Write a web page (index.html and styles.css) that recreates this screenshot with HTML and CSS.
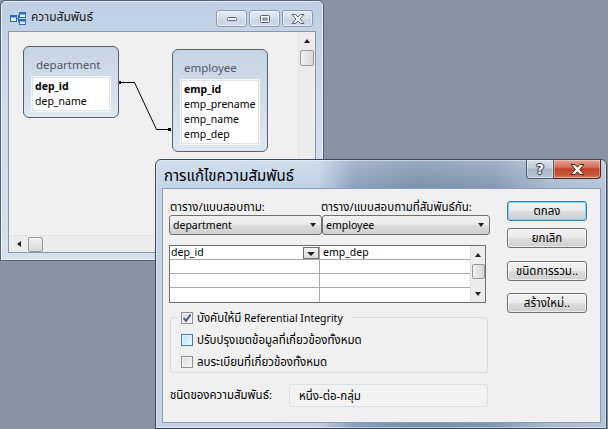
FILE: index.html
```html
<!DOCTYPE html>
<html>
<head>
<meta charset="utf-8">
<link rel="stylesheet" href="styles.css">
</head>
<body>
<div class="desktop">
  <div class="win">
    <div class="win-title">
      <svg class="win-icon" width="16" height="13" viewBox="0 0 16 13">
        <rect x="0.5" y="3.5" width="6" height="6" fill="#e8f2fc" stroke="#2d6cb5"/>
        <rect x="1" y="4" width="5" height="1.5" fill="#2d6cb5"/>
        <rect x="9.5" y="0.5" width="6" height="5" fill="#e8f2fc" stroke="#2d6cb5"/>
        <rect x="10" y="1" width="5" height="1.5" fill="#2d6cb5"/>
        <rect x="9.5" y="7.5" width="6" height="5" fill="#e8f2fc" stroke="#2d6cb5"/>
        <rect x="10" y="8" width="5" height="1.5" fill="#2d6cb5"/>
        <path d="M7 6.5 H8.5 V3 H9.5 M8.5 6.5 V10 H9.5" fill="none" stroke="#2d6cb5"/>
      </svg>
      <span class="win-caption">ความสัมพันธ์</span>
      <div class="cap-btns">
        <div class="cbtn"><svg width="12" height="6" viewBox="0 0 12 6"><rect x="1.5" y="1.5" width="9" height="3" rx="1" fill="#fff" stroke="#55647a"/></svg></div>
        <div class="cbtn"><svg width="12" height="10" viewBox="0 0 12 10"><rect x="1.5" y="1.5" width="9" height="7" rx="1" fill="#fff" stroke="#55647a"/><rect x="4" y="4" width="4" height="2" fill="#dfe7f1" stroke="#55647a"/></svg></div>
        <div class="cbtn"><svg width="14" height="10" viewBox="0 0 14 10"><polygon points="1,0.5 4.5,0.5 7,3 9.5,0.5 13,0.5 9,5 13,9.5 9.5,9.5 7,7 4.5,9.5 1,9.5 5,5" fill="#fff" stroke="#55647a" stroke-linejoin="round"/></svg></div>
      </div>
    </div>
    <div class="win-client">
      <div class="canvas-row">
        <div class="canvas">
          <svg class="rel-line" width="288" height="203" viewBox="0 0 288 203">
            <path d="M110.5 50.5 H125.5 L147.5 97.5 H161.5" fill="none" stroke="#000" stroke-width="1"/>
            <rect x="109" y="49" width="3" height="3" fill="#000"/>
            <rect x="159" y="96" width="3" height="3" fill="#000"/>
          </svg>
          <div class="tcard t-dep">
            <div class="tcard-title">department</div>
            <div class="tfields">
              <div class="tf key">dep_id</div>
              <div class="tf">dep_name</div>
            </div>
          </div>
          <div class="tcard t-emp">
            <div class="tcard-title">employee</div>
            <div class="tfields">
              <div class="tf key">emp_id</div>
              <div class="tf">emp_prename</div>
              <div class="tf">emp_name</div>
              <div class="tf">emp_dep</div>
            </div>
          </div>
        </div>
        <div class="vscroll">
          <div class="sarrow"><span class="tri-up"></span></div>
          <div class="vthumb"></div>
        </div>
      </div>
      <div class="hscroll">
        <div class="harrow"><span class="tri-left"></span></div>
        <div class="hthumb"></div>
      </div>
    </div>
  </div>

  <div class="dlg">
    <div class="dlg-title">
      <span class="dlg-caption">การแก้ไขความสัมพันธ์</span>
      <div class="dlg-btns">
        <div class="dbtn-help">?</div>
        <div class="dbtn-close"><svg width="15" height="11" viewBox="0 0 15 11"><polygon points="1,0.5 5,0.5 7.5,3.2 10,0.5 14,0.5 9.7,5.5 14,10.5 10,10.5 7.5,7.8 5,10.5 1,10.5 5.3,5.5" fill="#fff" stroke="#4a2018" stroke-linejoin="round"/></svg></div>
      </div>
    </div>
    <div class="dlg-client">
      <div class="dlg-main">
        <div class="lbl-row">
          <span class="th">ตาราง/แบบสอบถาม:</span>
          <span class="th">ตาราง/แบบสอบถามที่สัมพันธ์กัน:</span>
        </div>
        <div class="combo-row">
          <div class="combo"><span>department</span><span class="tri-down"></span></div>
          <div class="combo"><span>employee</span><span class="tri-down"></span></div>
        </div>
        <div class="fgrid">
          <div class="fcells">
            <div class="fc c1"><span>dep_id</span><span class="mini-dd"><span class="tri-down small"></span></span></div>
            <div class="fc">emp_dep</div>
            <div class="fc c1"></div><div class="fc"></div>
            <div class="fc c1"></div><div class="fc"></div>
            <div class="fc c1 last"></div><div class="fc last"></div>
          </div>
          <div class="gscroll">
            <div class="garrow"><span class="tri-up"></span></div>
            <div class="gthumb"></div>
            <div class="garrow bottom"><span class="tri-down"></span></div>
          </div>
        </div>
        <div class="group">
          <div class="chk-row legend">
            <span class="chk checked"><svg width="10" height="10" viewBox="0 0 10 10"><path d="M1.5 5 L4 7.8 L8.6 1.5" fill="none" stroke="#4c5f92" stroke-width="2"/></svg></span>
            <span><span class="th">บังคับให้มี</span> Referential Integrity</span>
          </div>
          <div class="chk-row">
            <span class="chk hot"></span>
            <span class="th">ปรับปรุงเขตข้อมูลที่เกี่ยวข้องทั้งหมด</span>
          </div>
          <div class="chk-row">
            <span class="chk"></span>
            <span class="th">ลบระเบียนที่เกี่ยวข้องทั้งหมด</span>
          </div>
        </div>
        <div class="type-row">
          <span class="th">ชนิดของความสัมพันธ์:</span>
          <div class="type-box"><span class="th">หนึ่ง-ต่อ-กลุ่ม</span></div>
        </div>
      </div>
      <div class="dlg-side">
        <div class="btn default"><span class="th">ตกลง</span></div>
        <div class="btn b-cancel"><span class="th">ยกเลิก</span></div>
        <div class="btn b-join"><span class="th">ชนิดการรวม..</span></div>
        <div class="btn b-new"><span class="th">สร้างใหม่..</span></div>
      </div>
    </div>
  </div>
</div>
</body>
</html>
```
FILE: styles.css
```css
* { box-sizing: border-box; }
body {
  margin: 0;
  width: 608px;
  height: 429px;
  overflow: hidden;
  background: #8a92a6;
  font-family: "Noto Sans", Tahoma, "Noto Sans Thai", Loma, Garuda, sans-serif;
  font-size: 10.5px;
  color: #000;
}
.th { font-size: 11.5px; }
.desktop { position: relative; width: 608px; height: 429px; }

/* ---------- relationship window ---------- */
.win {
  position: absolute;
  left: 0;
  top: 0;
  width: 324px;
  height: 261px;
  border: 1px solid #566276;
  border-radius: 6px 6px 0 0;
  background: linear-gradient(#bfd0e4, #cfdcea 40%, #d6e1ed);
  box-shadow: inset 0 0 0 1px rgba(255,255,255,0.55);
  padding: 0 7px 7px;
  display: flex;
  flex-direction: column;
}
.win-title { height: 30px; display: flex; align-items: flex-start; }
.win-icon { margin: 11px 0 0 2px; flex: none; }
.win-caption { margin: 8px 0 0 5px; line-height: 16px; font-size: 12px; color: #1a1a1a; }
.cap-btns { margin: 9px 3px 0 auto; display: flex; gap: 2px; }
.cbtn {
  width: 31px;
  height: 17px;
  border: 1px solid #8a9bb2;
  border-radius: 3px;
  background: linear-gradient(#e4ecf5, #d3deeb 50%, #c6d4e5 51%, #cfdbe9);
  box-shadow: inset 0 0 0 1px rgba(255,255,255,0.5);
  display: flex;
  align-items: center;
  justify-content: center;
}
.win-client {
  flex: 1;
  border: 1px solid #8597b0;
  background: #f0f0f0;
  display: flex;
  flex-direction: column;
}
.canvas-row { flex: 1; display: flex; }
.canvas { flex: 1; position: relative; }
.rel-line { position: absolute; left: 0; top: 0; }

.tcard {
  position: absolute;
  width: 96px;
  border: 1px solid #58606b;
  border-radius: 6px;
  background: linear-gradient(#c7d4e3, #d4dfeb 60%, #dfe8f2);
  padding: 0 8px 8px 8px;
}
.t-dep { left: 14px; top: 14px; height: 72px; }
.t-emp { left: 163px; top: 17px; height: 103px; }
.tcard-title {
  height: 30px;
  padding: 10px 0 0 4px;
  line-height: 16px;
  font-size: 11.5px;
  color: #4e5868;
}
.t-emp .tcard-title { padding-left: 3px; }
.tfields {
  background: #fff;
  border: 1px solid #dfe4ea;
  box-shadow: 0 0 0 1px #f4f7fa;
  padding: 1px 2px 1px 2px;
}
.tf { line-height: 15px; height: 15px; font-size: 10.5px; white-space: nowrap; }
.tf.key { font-weight: bold; }

.vscroll {
  width: 17px;
  background: #ececec;
  border-left: 1px solid #e2e2e2;
  display: flex;
  flex-direction: column;
  align-items: center;
}
.sarrow { height: 17px; width: 100%; display: flex; align-items: center; justify-content: center; }
.vthumb {
  margin-top: 1px;
  width: 14px;
  height: 16px;
  border: 1px solid #989898;
  border-radius: 2px;
  background: linear-gradient(to right, #f4f4f4, #e4e4e4 50%, #d8d8d8);
}
.hscroll {
  height: 17px;
  background: #ececec;
  border-top: 1px solid #e2e2e2;
  display: flex;
  align-items: center;
}
.harrow { width: 17px; height: 100%; display: flex; align-items: center; justify-content: center; margin-left: 1px; }
.hthumb {
  margin-left: 1px;
  width: 15px;
  height: 15px;
  border: 1px solid #989898;
  border-radius: 2px;
  background: linear-gradient(#f4f4f4, #e4e4e4 50%, #d8d8d8);
}
.tri-up { width: 0; height: 0; border-left: 3.5px solid transparent; border-right: 3.5px solid transparent; border-bottom: 4px solid #222; }
.tri-down { width: 0; height: 0; border-left: 3.5px solid transparent; border-right: 3.5px solid transparent; border-top: 4px solid #222; }
.tri-left { width: 0; height: 0; border-top: 3.5px solid transparent; border-bottom: 3.5px solid transparent; border-right: 4px solid #222; }

/* ---------- dialog ---------- */
.dlg {
  position: absolute;
  left: 155px;
  top: 159px;
  width: 452px;
  height: 270px;
  border: 1px solid #3b475a;
  border-radius: 6px 6px 0 0;
  background:
    linear-gradient(rgba(255,255,255,0.25), rgba(255,255,255,0) 30px),
    linear-gradient(to right, #c3d4e8 0, #c0d1e5 36%, #8a9fbb 44%, #788ea9 58%, #8297b2 75%, #a9bbd0 88%, #b4c4d7 100%);
  box-shadow: inset 0 0 0 1px rgba(255,255,255,0.45);
  padding: 0 5px 5px 6px;
  display: flex;
  flex-direction: column;
}
.dlg-title { height: 28px; display: flex; align-items: flex-start; }
.dlg-caption { margin: 6px 0 0 2px; line-height: 18px; font-size: 15px; color: #000; }
.dlg-btns { margin: 0 0 0 auto; display: flex; }
.dbtn-help {
  width: 28px;
  height: 19px;
  border: 1px solid #4d5a6c;
  border-top: none;
  border-radius: 0 0 0 4px;
  background: linear-gradient(#d9e1ea, #c3ceda 45%, #a7b4c4 50%, #b8c4d2);
  box-shadow: inset 0 0 0 1px rgba(255,255,255,0.45);
  color: #fff;
  font: bold 14px/18px "DejaVu Sans", sans-serif;
  text-align: center;
  text-shadow: 0 0 1px #2b3542, 1px 0 0 #2b3542, -1px 0 0 #2b3542, 0 1px 0 #2b3542, 0 -1px 0 #2b3542;
}
.dbtn-close {
  width: 47px;
  height: 19px;
  border: 1px solid #4a2520;
  border-top: none;
  border-left: none;
  border-radius: 0 0 4px 0;
  background: linear-gradient(#e6a394, #d4705c 40%, #c2412a 50%, #c85a3e 85%, #d98a6a);
  box-shadow: inset 0 0 0 1px rgba(255,255,255,0.35);
  display: flex;
  align-items: center;
  justify-content: center;
}
.dlg-client {
  flex: 1;
  border: 1px solid #8a9bb2;
  background: #f0f0f0;
  display: flex;
}
.dlg-main { width: 321px; margin-left: 6px; padding-top: 10px; flex: none; }
.lbl-row { display: grid; grid-template-columns: 151px 1fr; height: 16px; line-height: 16px; padding-left: 1px; white-space: nowrap; }
.combo-row { display: grid; grid-template-columns: 153px 168px; }
.combo {
  height: 20px;
  border: 1px solid #707070;
  border-radius: 3px;
  background: linear-gradient(#f2f2f2, #ebebeb 50%, #dddddd 51%, #cfcfcf);
  display: flex;
  align-items: center;
  justify-content: space-between;
  padding: 0 5px 0 3px;
  line-height: 16px;
}
.fgrid {
  margin-top: 10px;
  width: 317px;
  height: 58px;
  border: 1px solid #6e6e6e;
  background: #fff;
  display: flex;
}
.fcells { display: grid; grid-template-columns: 150px 150px; grid-auto-rows: 14px; }
.fc {
  border-bottom: 1px solid #a9a9a9;
  padding-left: 3px;
  line-height: 13px;
  height: 14px;
  display: flex;
  align-items: flex-start;
  justify-content: space-between;
}
.fc.c1 { border-right: 1px solid #a9a9a9; padding-left: 1px; }
.fc.last { border-bottom: none; }
.mini-dd {
  width: 16px;
  height: 12px;
  margin: 1px 0 0 0;
  border: 1px solid #707070;
  background: linear-gradient(#f4f4f4, #dcdcdc);
  display: flex;
  align-items: flex-end;
  justify-content: center;
  padding-bottom: 1px;
}
.tri-down.small { border-left-width: 4px; border-right-width: 4px; border-top-width: 4px; border-bottom: 1px solid transparent; }
.gscroll {
  width: 15px;
  border-left: 1px solid #e0e0e0;
  background: #ececec;
  display: flex;
  flex-direction: column;
  align-items: center;
}
.garrow { height: 17px; width: 100%; display: flex; align-items: center; justify-content: center; }
.garrow.bottom { margin-top: auto; height: 16px; }
.gthumb {
  width: 13px;
  height: 15px;
  margin-top: 1px;
  border: 1px solid #989898;
  border-radius: 2px;
  background: linear-gradient(to right, #f4f4f4, #e2e2e2 50%, #d6d6d6);
}
.group {
  margin: 14px 0 0 1px;
  width: 318px;
  border: 1px solid #d5dce3;
  border-radius: 3px;
  padding: 0 0 3px 10px;
  display: flex;
  flex-direction: column;
  gap: 8px;
}
.chk-row { display: flex; align-items: center; gap: 4px; height: 14px; line-height: 14px; white-space: nowrap; }
.chk-row.legend { margin-top: -7px; align-self: flex-start; background: #f0f0f0; margin-left: -3px; padding: 0 8px 0 3px; }
.chk {
  width: 12px;
  height: 12px;
  flex: none;
  border: 1px solid #8e8f8f;
  background: linear-gradient(135deg, #dcdcdc, #f6f6f6);
  box-shadow: inset 0 0 0 1px #f4f4f4;
  display: flex;
  align-items: center;
  justify-content: center;
}
.chk.checked { background: linear-gradient(135deg, #d8d8d8, #f5f5f5); }
.chk.hot { border-color: #3c7fb1; background: linear-gradient(135deg, #b9e2f8, #e9f7fe); box-shadow: inset 0 0 0 1px #def3fd; }
.type-row {
  margin: 11px 0 0 1px;
  display: grid;
  grid-template-columns: 119px 199px;
  align-items: center;
  white-space: nowrap;
}
.type-box {
  height: 23px;
  border: 1px solid #dadfe5;
  border-radius: 3px;
  background: #f2f2f2;
  padding-left: 9px;
  line-height: 21px;
}
.dlg-side { margin-left: 17px; padding-top: 12px; display: flex; flex-direction: column; width: 80px; flex: none; }
.btn {
  height: 20px;
  border: 1px solid #707070;
  border-radius: 3px;
  background: linear-gradient(#f2f2f2, #ebebeb 50%, #dddddd 51%, #cfcfcf);
  box-shadow: inset 0 0 0 1px rgba(255,255,255,0.6);
  text-align: center;
  line-height: 17px;
  white-space: nowrap;
}
.btn.default { border-color: #3c7fb1; box-shadow: inset 0 0 0 1px #7ad2f5; }
.b-cancel { margin-top: 7px; }
.b-join { margin-top: 13px; }
.b-new { margin-top: 12px; }
```
